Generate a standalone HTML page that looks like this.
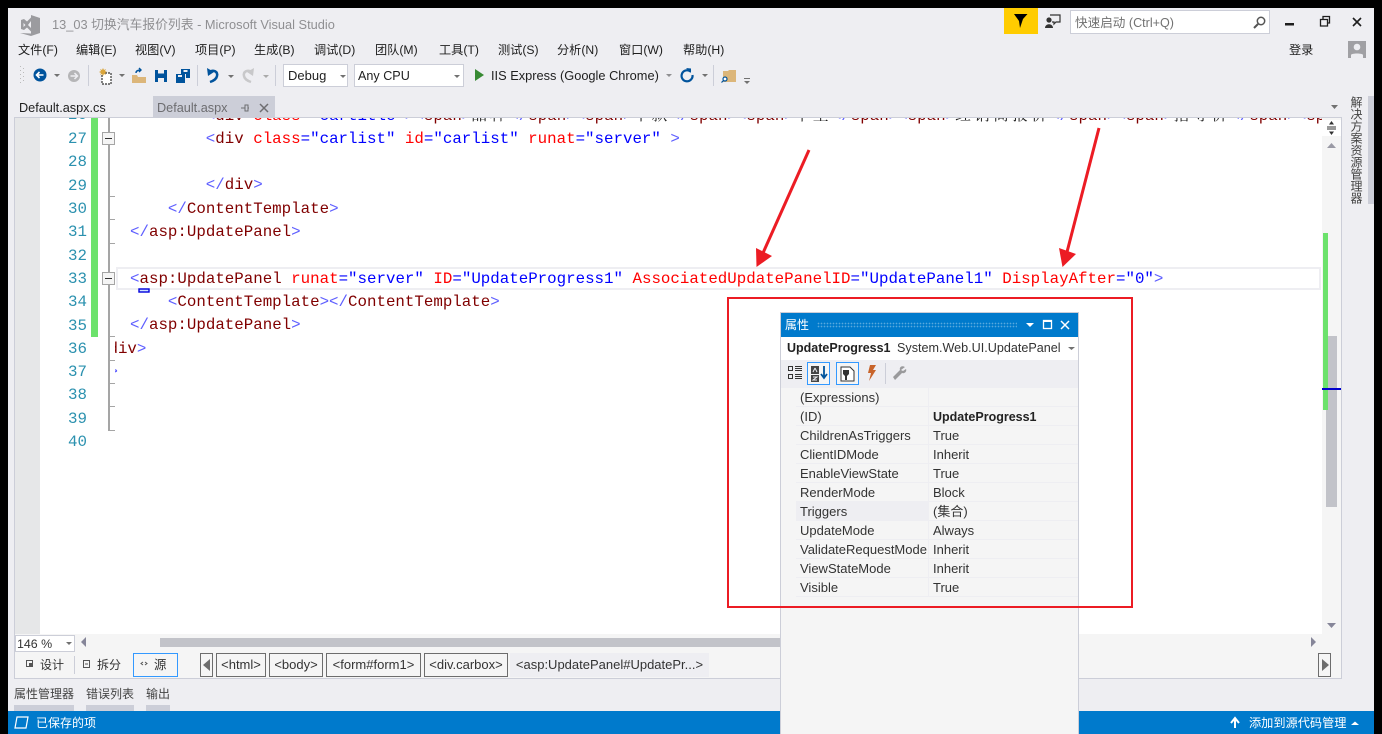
<!DOCTYPE html>
<html><head><meta charset="utf-8"><style>
html,body{margin:0;padding:0;background:#000;width:1382px;height:734px;overflow:hidden}
body{position:relative;font-family:"Liberation Sans","Noto Sans CJK SC",sans-serif;font-size:12.2px;color:#1e1e1e}
div{position:absolute;box-sizing:border-box}
.t{white-space:nowrap;height:18px;line-height:18px}
.b{background:#eeeef2}
#code{left:115px;top:118px;width:1207px;height:516px;overflow:hidden;font-family:"Liberation Mono","Noto Serif CJK SC",monospace;font-size:15.8px}
#code div{white-space:pre;height:23px;line-height:23px}
.d{color:#5f5fff}.e{color:#800000}.a{color:#ff0000}.v{color:#0000ff}
.c{letter-spacing:3.2px}
.n{left:40px;width:47px;text-align:right;font-family:"Liberation Mono",monospace;font-size:15.8px;color:#2b91af;height:23px;line-height:23px}
.r{left:796px;width:282px;height:19px;border-bottom:1px solid #eeeef2;background:#f5f5f5}
.r div{white-space:nowrap;top:1px;line-height:18px;height:18px;font-size:13px;color:#333}
.r .k{left:4px}.r .l{left:137px}
.r i{position:absolute;left:132px;top:0;width:1px;height:19px;background:#eeeef2}
.bc{top:653px;height:24px;border:1px solid #6d6d6d;line-height:21px;text-align:center;white-space:nowrap;font-size:13px;color:#333}
</style></head><body>
<div class="b" style="left:8px;top:8px;width:1366px;height:726px"></div>

<!-- title -->
<div class="t" style="left:52px;top:16px;color:#8f8f92;font-size:12.8px">13_03 切换汽车报价列表 - Microsoft Visual Studio</div>
<div style="left:1004px;top:8px;width:34px;height:26px;background:#ffcc00"></div>
<div style="left:1070px;top:10px;width:200px;height:24px;background:#fff;border:1px solid #ccced8"></div>
<div class="t" style="left:1075px;top:14px;color:#717171;font-size:12.6px">快速启动 (Ctrl+Q)</div>

<!-- menu -->
<div class="t" style="left:18px;top:41px">文件(F)</div>
<div class="t" style="left:76px;top:41px">编辑(E)</div>
<div class="t" style="left:135px;top:41px">视图(V)</div>
<div class="t" style="left:195px;top:41px">项目(P)</div>
<div class="t" style="left:254px;top:41px">生成(B)</div>
<div class="t" style="left:314px;top:41px">调试(D)</div>
<div class="t" style="left:375px;top:41px">团队(M)</div>
<div class="t" style="left:439px;top:41px">工具(T)</div>
<div class="t" style="left:498px;top:41px">测试(S)</div>
<div class="t" style="left:557px;top:41px">分析(N)</div>
<div class="t" style="left:619px;top:41px">窗口(W)</div>
<div class="t" style="left:683px;top:41px">帮助(H)</div>
<div class="t" style="left:1289px;top:41px">登录</div>

<!-- toolbar -->
<div style="left:283px;top:64px;width:65px;height:23px;background:#fff;border:1px solid #ccced8"></div>
<div class="t" style="left:288px;top:67px;font-size:13px">Debug</div>
<div style="left:354px;top:64px;width:110px;height:23px;background:#fff;border:1px solid #ccced8"></div>
<div class="t" style="left:358px;top:67px;font-size:12.6px">Any CPU</div>
<div class="t" style="left:491px;top:67px;font-size:12.8px">IIS Express (Google Chrome)</div>

<!-- doc tabs -->
<div style="left:153px;top:96px;width:122px;height:22px;background:#ccced8"></div>
<div class="t" style="left:19px;top:99px;font-size:12.7px">Default.aspx.cs</div>
<div class="t" style="left:157px;top:99px;font-size:12.7px;color:#6d6d70">Default.aspx</div>

<!-- editor frame -->
<div style="left:14px;top:117px;width:1328px;height:562px;background:#f5f5f5;border:1px solid #ccced8"></div>
<div style="left:15px;top:118px;width:25px;height:516px;background:#e6e7e8"></div>
<div style="left:40px;top:118px;width:1282px;height:516px;background:#fff"></div>
<div style="left:91px;top:118px;width:7px;height:219px;background:#6ce26c"></div>
<div style="left:116px;top:267px;width:1205px;height:23px;border:2px solid #eeeef2"></div>

<div style="left:40px;top:118px;width:47px;height:7px;overflow:hidden"><div class="n" style="left:0;top:-14px">26</div></div>
<div class="n" style="top:127.500px">27</div>
<div class="n" style="top:151px">28</div>
<div class="n" style="top:174.500px">29</div>
<div class="n" style="top:197.500px">30</div>
<div class="n" style="top:221px">31</div>
<div class="n" style="top:244.500px">32</div>
<div class="n" style="top:267.500px">33</div>
<div class="n" style="top:291px">34</div>
<div class="n" style="top:314.500px">35</div>
<div class="n" style="top:337.500px">36</div>
<div class="n" style="top:361px">37</div>
<div class="n" style="top:384px">38</div>
<div class="n" style="top:407.500px">39</div>
<div class="n" style="top:431px">40</div>

<div id="code">
<div style="left:90.800px;top:-13.450px"><span class="d">&lt;</span><span class="e">div</span> <span class="a">class</span><span class="v">="cartitle"</span><span class="d">&gt;&lt;</span><span class="e">span</span><span class="d">&gt;</span><span class="c">品种</span><span class="d">&lt;/</span><span class="e">span</span><span class="d">&gt;&lt;</span><span class="e">span</span><span class="d">&gt;</span><span class="c">年款</span><span class="d">&lt;/</span><span class="e">span</span><span class="d">&gt;&lt;</span><span class="e">span</span><span class="d">&gt;</span><span class="c">车型</span><span class="d">&lt;/</span><span class="e">span</span><span class="d">&gt;&lt;</span><span class="e">span</span><span class="d">&gt;</span><span class="c">经销商报价</span><span class="d">&lt;/</span><span class="e">span</span><span class="d">&gt;&lt;</span><span class="e">span</span><span class="d">&gt;</span><span class="c">指导价</span><span class="d">&lt;/</span><span class="e">span</span><span class="d">&gt;&lt;</span><span class="e">span</span></div>
<div style="left:90.800px;top:9.850px"><span class="d">&lt;</span><span class="e">div</span> <span class="a">class</span><span class="v">="carlist"</span> <span class="a">id</span><span class="v">="carlist"</span> <span class="a">runat</span><span class="v">="server"</span> <span class="d">&gt;</span></div>
<div style="left:90.800px;top:56.450px"><span class="d">&lt;/</span><span class="e">div</span><span class="d">&gt;</span></div>
<div style="left:52.900px;top:79.750px"><span class="d">&lt;/</span><span class="e">ContentTemplate</span><span class="d">&gt;</span></div>
<div style="left:15px;top:103.050px"><span class="d">&lt;/</span><span class="e">asp:UpdatePanel</span><span class="d">&gt;</span></div>
<div style="left:15px;top:149.650px"><span class="d">&lt;</span><span class="e">asp:UpdatePanel</span> <span class="a">runat</span><span class="v">="server"</span> <span class="a">ID</span><span class="v">="UpdateProgress1"</span> <span class="a">AssociatedUpdatePanelID</span><span class="v">="UpdatePanel1"</span> <span class="a">DisplayAfter</span><span class="v">="0"</span><span class="d">&gt;</span></div>
<div style="left:52.900px;top:172.950px"><span class="d">&lt;</span><span class="e">ContentTemplate</span><span class="d">&gt;&lt;/</span><span class="e">ContentTemplate</span><span class="d">&gt;</span></div>
<div style="left:15px;top:196.250px"><span class="d">&lt;/</span><span class="e">asp:UpdatePanel</span><span class="d">&gt;</span></div>
<div style="left:-25.500px;top:219.550px"><span class="d">&lt;/</span><span class="e">div</span><span class="d">&gt;</span></div>
<div style="left:-6.500px;top:242.850px"><span class="d">&gt;</span></div>
</div>

<!-- vertical scrollbar -->
<div style="left:1322px;top:120px;width:19px;height:16px;background:#fff"></div>
<div style="left:1326px;top:336px;width:11px;height:171px;background:#c2c3c9"></div>
<div style="left:1323px;top:233px;width:5px;height:177px;background:#6ce26c"></div>
<div style="left:1322px;top:388px;width:19px;height:2px;background:#0000cd"></div>

<!-- right rail -->
<div class="t" style="left:1347px;top:96px;width:18px;height:108px;writing-mode:vertical-rl;line-height:18px;font-size:12px;letter-spacing:0;color:#444">解决方案资源管理器</div>
<div style="left:1368px;top:96px;width:6px;height:108px;background:#ccced8"></div>

<!-- horizontal scroll row -->
<div style="left:15px;top:635px;width:60px;height:17px;background:#fff;border:1px solid #ccced8"></div>
<div class="t" style="left:17px;top:635px;font-size:12.4px;color:#333">146 %</div>
<div style="left:160px;top:638px;width:620px;height:9px;background:#c2c3c9"></div>

<!-- design tabs -->
<div class="t" style="left:40px;top:656px;font-size:12px;color:#333">设计</div>
<div class="t" style="left:97px;top:656px;font-size:12px;color:#333">拆分</div>
<div style="left:74px;top:656px;width:1px;height:18px;background:#ccced8"></div>
<div style="left:133px;top:653px;width:45px;height:24px;border:1px solid #3399ff"></div>
<div class="t" style="left:154px;top:656px;font-size:12.4px;color:#333">源</div>
<div class="bc" style="left:200px;width:13px"></div>
<div class="bc" style="left:216px;width:50px">&lt;html&gt;</div>
<div class="bc" style="left:269px;width:54px">&lt;body&gt;</div>
<div class="bc" style="left:326px;width:95px">&lt;form#form1&gt;</div>
<div class="bc" style="left:424px;width:84px">&lt;div.carbox&gt;</div>
<div class="bc" style="left:510px;width:199px;border:0;background:#eeeef2;line-height:23px">&lt;asp:UpdatePanel#UpdatePr...&gt;</div>
<div class="bc" style="left:1318px;width:13px"></div>

<!-- bottom tool tabs -->
<div class="t" style="left:14px;top:685px;font-size:12px;color:#444">属性管理器</div>
<div class="t" style="left:86px;top:685px;font-size:12px;color:#444">错误列表</div>
<div class="t" style="left:146px;top:685px;font-size:12px;color:#444">输出</div>
<div style="left:14px;top:705px;width:60px;height:6px;background:#ccced8"></div>
<div style="left:86px;top:705px;width:48px;height:6px;background:#ccced8"></div>
<div style="left:146px;top:705px;width:24px;height:6px;background:#ccced8"></div>

<!-- status bar -->
<div style="left:8px;top:711px;width:1366px;height:23px;background:#007acc"></div>
<div class="t" style="left:36px;top:714px;color:#fff;font-size:12px">已保存的项</div>
<div class="t" style="left:1249px;top:714px;color:#fff;font-size:12.200px">添加到源代码管理</div>

<!-- properties panel -->
<div style="left:780px;top:312px;width:299px;height:422px;background:#f5f5f5;border:1px solid #ccced8;border-bottom:0"></div>
<div style="left:781px;top:313px;width:297px;height:24px;background:#007acc"></div>
<div class="t" style="left:785px;top:316px;color:#fff;font-size:12px">属性</div>
<div style="left:817px;top:322px;width:200px;height:6px;background-image:radial-gradient(#5aa9dd 35%,transparent 40%);background-size:3px 3px"></div>
<div style="left:781px;top:337px;width:297px;height:23px;background:#fff"></div>
<div class="t" style="left:787px;top:339px;font-size:12.500px;font-weight:bold;color:#222">UpdateProgress1</div>
<div class="t" style="left:897px;top:339px;font-size:12.600px;color:#333">System.Web.UI.UpdatePanel</div>
<div style="left:781px;top:360px;width:297px;height:28px;background:#eeeef2"></div>

<div class="r" style="top:388px"><div class="k">(Expressions)</div><i></i></div>
<div class="r" style="top:407px"><div class="k">(ID)</div><i></i><div class="l" style="font-weight:bold;color:#222;font-size:12.500px">UpdateProgress1</div></div>
<div class="r" style="top:426px"><div class="k">ChildrenAsTriggers</div><i></i><div class="l">True</div></div>
<div class="r" style="top:445px"><div class="k">ClientIDMode</div><i></i><div class="l">Inherit</div></div>
<div class="r" style="top:464px"><div class="k">EnableViewState</div><i></i><div class="l">True</div></div>
<div class="r" style="top:483px"><div class="k">RenderMode</div><i></i><div class="l">Block</div></div>
<div class="r" style="top:502px"><div style="left:0;top:0;width:132px;height:19px;background:#eeeef2"></div><div class="k">Triggers</div><i></i><div class="l">(集合)</div></div>
<div class="r" style="top:521px"><div class="k">UpdateMode</div><i></i><div class="l">Always</div></div>
<div class="r" style="top:540px"><div class="k" style="width:128px;overflow:hidden">ValidateRequestMode</div><i></i><div class="l">Inherit</div></div>
<div class="r" style="top:559px"><div class="k">ViewStateMode</div><i></i><div class="l">Inherit</div></div>
<div class="r" style="top:578px"><div class="k">Visible</div><i></i><div class="l">True</div></div>

<!-- icons & annotations -->
<svg width="1382" height="734" viewBox="0 0 1382 734" style="position:absolute;left:0;top:0" xmlns="http://www.w3.org/2000/svg">
<!-- VS logo -->
<path d="M31 15l9 3v15l-9 3-11-3 11 .5z" fill="#9b9b9f"/>
<path d="M21 20l3-1 3 2.500 4-4v14l-4-4-3 2.500-3-1z" fill="#9b9b9f"/>
<path d="M23.500 23l2 2-2 2zM31 21l-3 4 3 3z" fill="#eeeef2"/>
<!-- top right -->
<path d="M1014 14h13.500l-4.500 5-3 9-1-7z" fill="#000"/>
<circle cx="1049" cy="20" r="2.600" fill="#333"/><path d="M1045 28c0-5 8-5 8 0z" fill="#333"/>
<path d="M1050 15h10v7h-4l-2 2v-2h-2" fill="none" stroke="#333" stroke-width="1.200"/>
<circle cx="1261" cy="21" r="3.700" fill="none" stroke="#555" stroke-width="1.500"/><path d="M1258 24l-4 4" stroke="#555" stroke-width="2"/>
<rect x="1285" y="23" width="9" height="2.500" fill="#1e1e1e"/>
<path d="M1320.500 19.500h7v6.500h-7zM1323 19v-2.500h6.500v6.500h-2" fill="none" stroke="#1e1e1e" stroke-width="1.300"/>
<path d="M1353 18l8 8M1361 18l-8 8" stroke="#1e1e1e" stroke-width="1.600"/>
<rect x="1348" y="41" width="18" height="17" fill="#a0a0a4"/><circle cx="1357" cy="47" r="3.300" fill="#eeeef2"/><path d="M1351 58v-3c0-2 12-2 12 0v3z" fill="#eeeef2"/>
<!-- toolbar -->
<g fill="#bbb"><rect x="20" y="66" width="1" height="1"/><rect x="23" y="68" width="1" height="1"/><rect x="20" y="70" width="1" height="1"/><rect x="23" y="72" width="1" height="1"/><rect x="20" y="74" width="1" height="1"/><rect x="23" y="76" width="1" height="1"/><rect x="20" y="78" width="1" height="1"/><rect x="23" y="80" width="1" height="1"/><rect x="20" y="82" width="1" height="1"/></g>
<circle cx="40" cy="75" r="6.500" fill="#00539c"/><path d="M36.500 75h7M39.500 72l-3 3 3 3" fill="none" stroke="#fff" stroke-width="1.600"/>
<circle cx="74" cy="76" r="6" fill="#b5b5b7"/><path d="M70.500 76h6.500M74.500 73l3 3-3 3" fill="none" stroke="#eeeef2" stroke-width="1.500"/>
<g fill="#717171"><path d="M54 74h6l-3 3zM119 74h6l-3 3zM228 75h6l-3 3z"/><path d="M702 74h6l-3 3z"/></g>
<g fill="#aaa"><path d="M263 75h6l-3 3z"/></g>
<g fill="#ccced8"><rect x="88" y="65" width="1" height="21"/><rect x="197" y="65" width="1" height="21"/><rect x="275" y="65" width="1" height="21"/><rect x="713" y="65" width="1" height="21"/></g>
<path d="M102 73h9v11h-9z" fill="#fff" stroke="#333" stroke-width="1.200" stroke-dasharray="2 1"/>
<path d="M103 68l1 2 2-1-1 2 2 1-2 1 1 2-2-1-1 2-1-2-2 1 1-2-2-1 2-1-1-2 2 1z" fill="#d9a53c"/>
<path d="M132 75h5l1 2h8v6h-14z" fill="#dcb67a"/><path d="M136 73c0-2 2-3 5-3M139 68l2 2-2 2" fill="none" stroke="#00539c" stroke-width="1.400"/>
<path d="M155 70h12v12h-12z" fill="#00539c"/><rect x="158" y="70" width="6" height="3.500" fill="#eeeef2"/><rect x="158" y="78" width="6" height="4" fill="#eeeef2"/>
<path d="M176 74h9v9h-9z" fill="#00539c"/><path d="M181 69h9v9h-4v-4h-5z" fill="#00539c"/><rect x="178" y="75" width="4" height="2" fill="#eeeef2"/><rect x="183.500" y="70" width="4" height="2" fill="#eeeef2"/>
<path d="M209 72c5-3 9 0 8 4-.5 3-4 5-7 6" fill="none" stroke="#00539c" stroke-width="2.500"/><path d="M207 68l1 8 6-4z" fill="#00539c"/>
<path d="M252 72c-5-3-9 0-8 4 .5 3 4 5 7 6" fill="none" stroke="#c8c8ca" stroke-width="2.500"/><path d="M254 68l-1 8-6-4z" fill="#c8c8ca"/>
<path d="M340 75h6l-3 3z" fill="#717171"/><path d="M454 75h6l-3 3z" fill="#717171"/>
<path d="M475 69l9 6-9 6z" fill="#388a34"/>
<path d="M666 74h6l-3 3z" fill="#8f8f92"/>
<path d="M690.500 71.500a5.500 5.500 0 1 0 2 3.500" fill="none" stroke="#00539c" stroke-width="2.200"/><path d="M686 68l5 .5v4.500z" fill="#00539c"/>
<path d="M723 71h5l1-1h7v12h-13z" fill="#dcb67a"/><circle cx="725" cy="79" r="2" fill="#fff" stroke="#00539c" stroke-width="1.200"/><path d="M723.500 80.500l-2 2" stroke="#00539c" stroke-width="1.200"/>
<rect x="744" y="78" width="6" height="1" fill="#717171"/><path d="M744 81h6l-3 3z" fill="#717171"/>
<!-- tab pin & close -->
<path d="M241 108h4M245 105v6h3v-6zM248 108h1" fill="none" stroke="#6d6d70" stroke-width="1"/>
<path d="M260 104l8 8M268 104l-8 8" stroke="#6d6d70" stroke-width="1.500"/>
<path d="M1331 105h7l-3.500 4z" fill="#717171"/>
<!-- collapse + outline -->
<rect x="108" y="118" width="2" height="313" fill="#a5a5a5"/>
<g fill="#a5a5a5"><rect x="108" y="196" width="7" height="1"/><rect x="108" y="219" width="7" height="1"/><rect x="108" y="243" width="7" height="1"/><rect x="108" y="336" width="7" height="1"/><rect x="108" y="360" width="7" height="1"/><rect x="108" y="383" width="7" height="1"/><rect x="108" y="406" width="7" height="1"/><rect x="108" y="430" width="7" height="1"/></g>
<rect x="102.500" y="132.500" width="12" height="12" fill="#f5f5f5" stroke="#a5a5a5"/><rect x="105" y="138" width="7" height="1" fill="#333"/>
<rect x="102.500" y="272.500" width="12" height="12" fill="#f5f5f5" stroke="#a5a5a5"/><rect x="105" y="278" width="7" height="1" fill="#333"/>
<rect x="139" y="289" width="10" height="3" fill="#cfe4ff" stroke="#0000dd" stroke-width="1.400"/>
<!-- scrollbar split -->
<rect x="1327" y="126.500" width="9" height="1" fill="#333"/><rect x="1327" y="128.500" width="9" height="1" fill="#333"/>
<path d="M1331.500 121l-2.500 3.500h5zM1331.500 135l-2.500-3.500h5z" fill="#333"/>
<path d="M1327 148l4.500-5 4.500 5z" fill="#9a9aa5"/>
<path d="M1327 623l4.500 5 4.500-5z" fill="#868699"/>
<path d="M86 637v10l-5-5z" fill="#868699"/>
<path d="M1311 637v10l5-5z" fill="#868699"/>
<path d="M66 642h6l-3 3z" fill="#717171"/>
<!-- design icons -->
<rect x="26.500" y="660.500" width="6" height="6" fill="none" stroke="#555"/><rect x="29" y="663" width="4" height="4" fill="#555"/>
<rect x="83.500" y="660.500" width="6" height="7" fill="none" stroke="#555"/><rect x="85" y="663.500" width="3" height="1" fill="#555"/>
<path d="M143 662l-2 1.500 2 1.500M145 662l2 1.500-2 1.500" fill="none" stroke="#555"/>
<path d="M210 659v12l-7-6z" fill="#6d6d6d"/>
<path d="M1322 659v12l7-6z" fill="#6d6d6d"/>
<!-- status icons -->
<path d="M17 717h11l-2 11h-11z" fill="none" stroke="#fff" stroke-width="1.200"/>
<path d="M1235 728v-9M1231 723l4-5 4 5" fill="none" stroke="#fff" stroke-width="2"/>
<path d="M1351 725l4-3.500 4 3.500z" fill="#fff"/>
<!-- panel title icons -->
<path d="M1026 323h8l-4 4z" fill="#fff"/>
<rect x="1043.500" y="320.500" width="8" height="8" fill="none" stroke="#fff" stroke-width="1.300"/><rect x="1043" y="320" width="9" height="2" fill="#fff"/>
<path d="M1061 321l8 8M1069 321l-8 8" stroke="#fff" stroke-width="1.500"/>
<path d="M1068 347h7l-3.500 3z" fill="#717171"/>
<!-- panel toolbar -->
<g fill="#333"><rect x="788" y="366" width="5" height="5"/><rect x="788" y="374" width="5" height="5"/></g>
<g fill="#eeeef2"><rect x="789" y="367" width="3" height="3"/><rect x="789" y="375" width="3" height="3"/></g>
<g fill="#333"><rect x="795" y="366" width="7" height="1"/><rect x="795" y="368" width="7" height="1"/><rect x="795" y="370" width="7" height="1"/><rect x="795" y="374" width="7" height="1"/><rect x="795" y="376" width="7" height="1"/><rect x="795" y="378" width="7" height="1"/></g>
<rect x="807.500" y="362.500" width="22" height="22" fill="#f5f5f5" stroke="#3399ff"/>
<rect x="811" y="366" width="8" height="8" fill="#444"/><rect x="811" y="375" width="8" height="7" fill="#444"/>
<path d="M815 368l-2 4M815 368l2 4M813 377h4l-4 3h4" stroke="#eeeef2" fill="none"/>
<path d="M824 366v11M821 374l3 4 3-4" fill="none" stroke="#00539c" stroke-width="1.800"/>
<rect x="836.500" y="362.500" width="22" height="22" fill="#f5f5f5" stroke="#3399ff"/>
<path d="M841 367h9l4 4v10h-13z" fill="#fff" stroke="#333"/>
<path d="M843 370h6v4l-2 2v4h-2v-4l-2-2z" fill="#333"/>
<path d="M870 365h6l-3 5h3l-7 11 2-8h-3z" fill="#c8642b"/>
<rect x="885" y="363" width="1" height="21" fill="#ccced8"/>
<path d="M905 367c-3-2-6 0-5 3l-7 7 2 3 7-7c3 1 5-2 4-4l-3 2-2-1z" fill="#9a9a9c"/>
<!-- annotations -->
<rect x="728" y="298" width="404" height="309" fill="none" stroke="#ec1c24" stroke-width="2"/>
<path d="M809 150L763 253" stroke="#ec1c24" stroke-width="3" fill="none"/><path d="M756.500 267l-.5-19 16 8z" fill="#ec1c24"/>
<path d="M1099 128L1067 252" stroke="#ec1c24" stroke-width="3" fill="none"/><path d="M1062.500 267l-3.500-19 17 6z" fill="#ec1c24"/>
</svg>
</body></html>
